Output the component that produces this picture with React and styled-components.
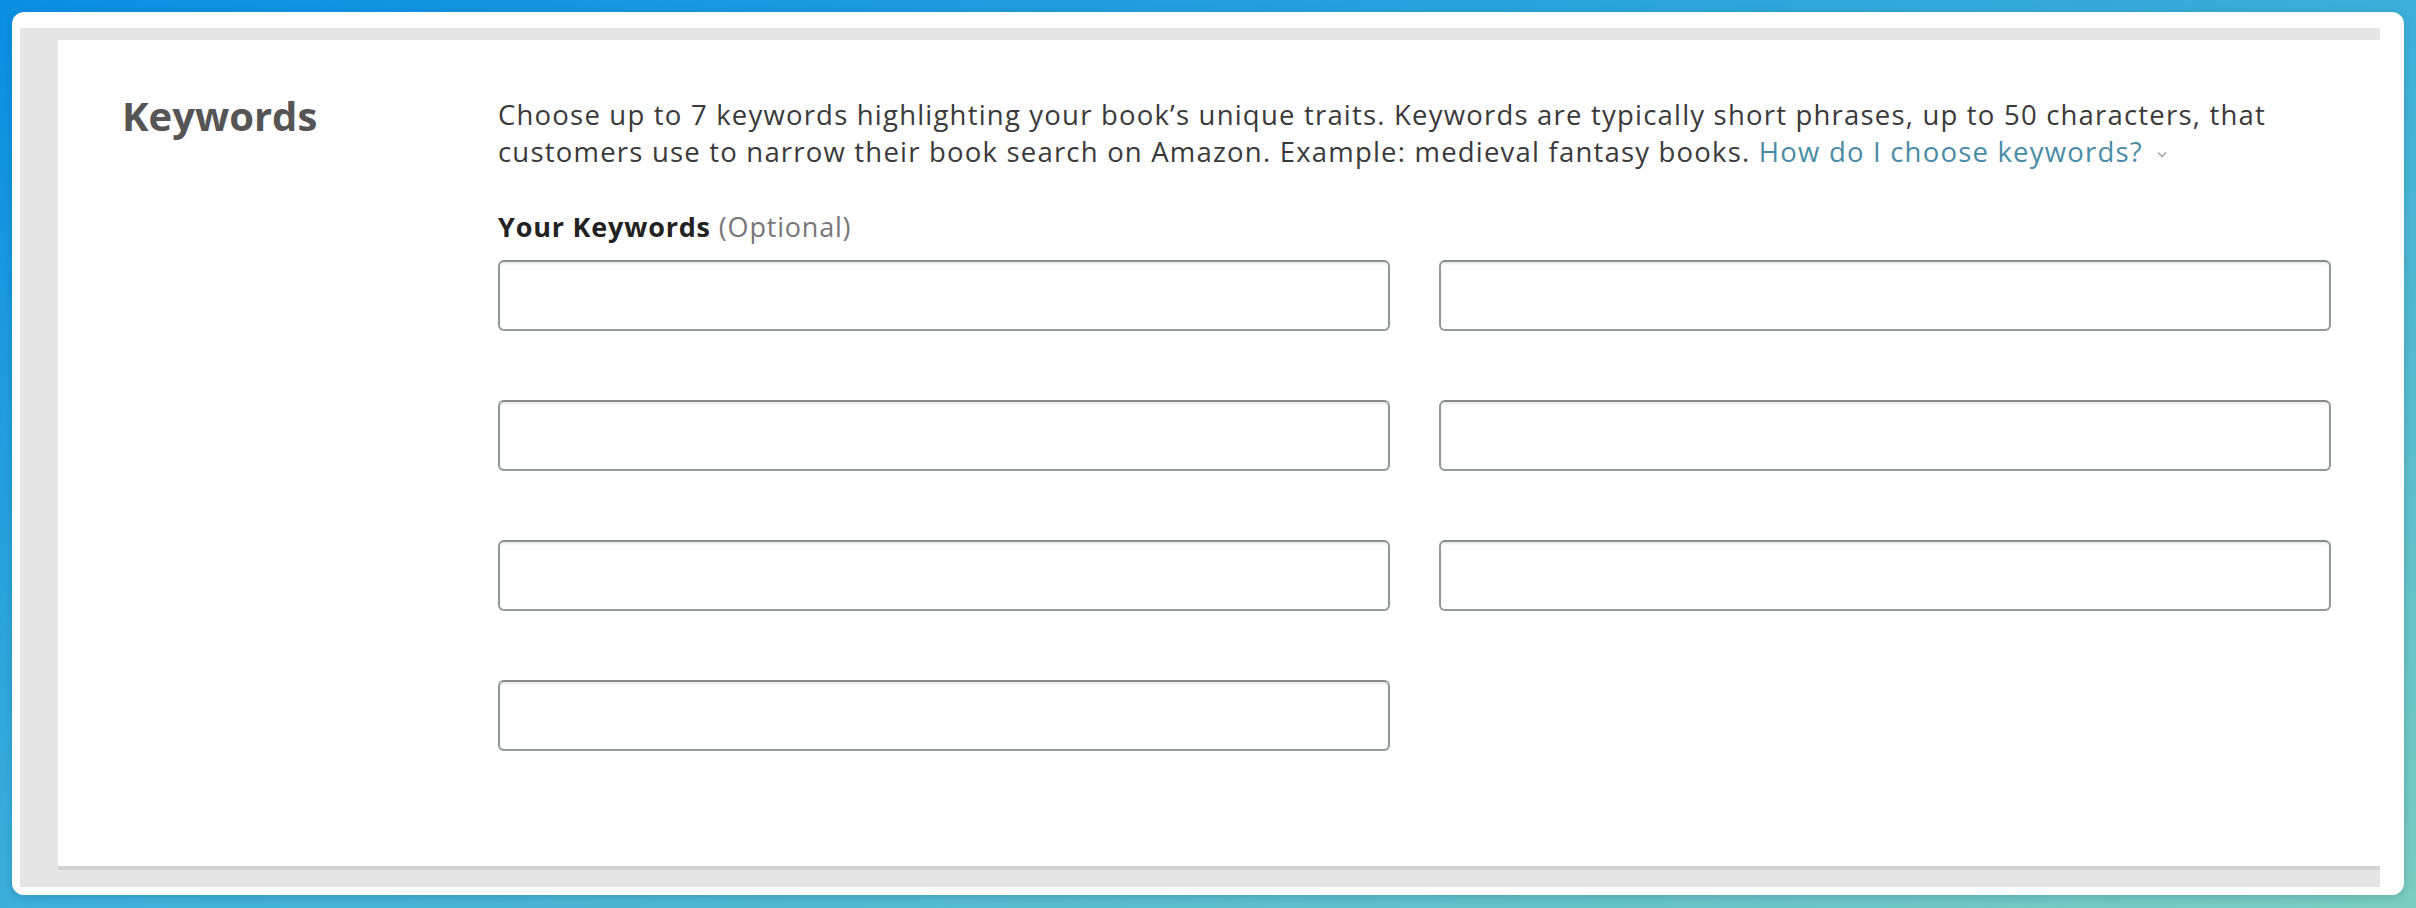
import React from "react";
import styled, { createGlobalStyle } from "styled-components";

const Global = createGlobalStyle`
  html, body { margin: 0; padding: 0; }
  body { font-family: "Open Sans", "Noto Sans", Arial, sans-serif; }
  * { box-sizing: border-box; }
`;

const Page = styled.div`
  height: 908px;
  padding: 12px 12px 13px 12px;
  display: flex;
  background: linear-gradient(to bottom right, #0a8ee2 0%, #3cafd9 50%, #7bcdbf 100%);
`;

const Card = styled.div`
  flex: 1;
  display: flex;
  background: #ffffff;
  border-radius: 12px;
  padding: 16px 24px 8px 8px;
  box-shadow: 0 2px 8px rgba(0, 40, 80, 0.18);
`;

const Frame = styled.div`
  flex: 1;
  display: flex;
  background: #e5e5e5;
  padding: 12px 0 17px 38px;
`;

const Panel = styled.section`
  flex: 1;
  display: grid;
  grid-template-columns: 376px 1fr;
  align-content: start;
  background: #ffffff;
  border-bottom: 4px solid #d2d2d2;
  padding: 56px 49px 0 64px;
`;

const Heading = styled.h2`
  margin: 0;
  font-size: 40px;
  line-height: 40px;
  font-weight: 700;
  color: #555555;
`;

const Body = styled.div`
  display: flex;
  flex-direction: column;
`;

const Description = styled.p`
  margin: 0;
  font-size: 27.5px;
  letter-spacing: 1.2px;
  line-height: 37px;
  color: #3a3a3a;
`;

const HelpLink = styled.a`
  color: #4a8ca6;
  text-decoration: none;
  cursor: pointer;
`;

const Chevron = styled.svg`
  display: inline-block;
  margin-left: 14px;
  vertical-align: 4px;
`;

const Label = styled.div`
  margin-top: 38px;
  font-size: 27px;
  letter-spacing: 0.8px;
  line-height: 37px;
  font-weight: 700;
  color: #222222;
`;

const Optional = styled.span`
  font-weight: 400;
  color: #777777;
  margin-left: 8px;
`;

const Grid = styled.div`
  margin-top: 15px;
  display: grid;
  grid-template-columns: 1fr 1fr;
  column-gap: 49px;
  row-gap: 69px;
`;

const Input = styled.input`
  height: 71px;
  width: 100%;
  border: 2px solid #959898;
  border-top-color: #888b8b;
  border-radius: 6px;
  background: #ffffff;
  box-shadow: inset 0 2px 2px rgba(0, 0, 0, 0.08);
  font-family: inherit;
  font-size: 26px;
  padding: 0 14px;
  outline: none;
`;

export default function App() {
  const fields = Array.from({ length: 7 });
  return (
    <>
      <Global />
      <Page>
        <Card>
          <Frame>
            <Panel>
              <Heading>Keywords</Heading>
              <Body>
                <Description>
                  Choose up to 7 keywords highlighting your book’s unique traits. Keywords are typically short phrases, up to 50 characters, that customers use to narrow their book search on Amazon. Example: medieval fantasy books.{" "}
                  <HelpLink>How do I choose keywords?</HelpLink>
                  <Chevron width="10" height="7" viewBox="0 0 10 7">
                    <path d="M1 1.5 L5 5.5 L9 1.5" fill="none" stroke="#a8a8a8" strokeWidth="1.6" />
                  </Chevron>
                </Description>
                <Label>
                  Your Keywords<Optional>(Optional)</Optional>
                </Label>
                <Grid>
                  {fields.map((_, i) => (
                    <Input key={i} type="text" aria-label={`Keyword ${i + 1}`} />
                  ))}
                </Grid>
              </Body>
            </Panel>
          </Frame>
        </Card>
      </Page>
    </>
  );
}
